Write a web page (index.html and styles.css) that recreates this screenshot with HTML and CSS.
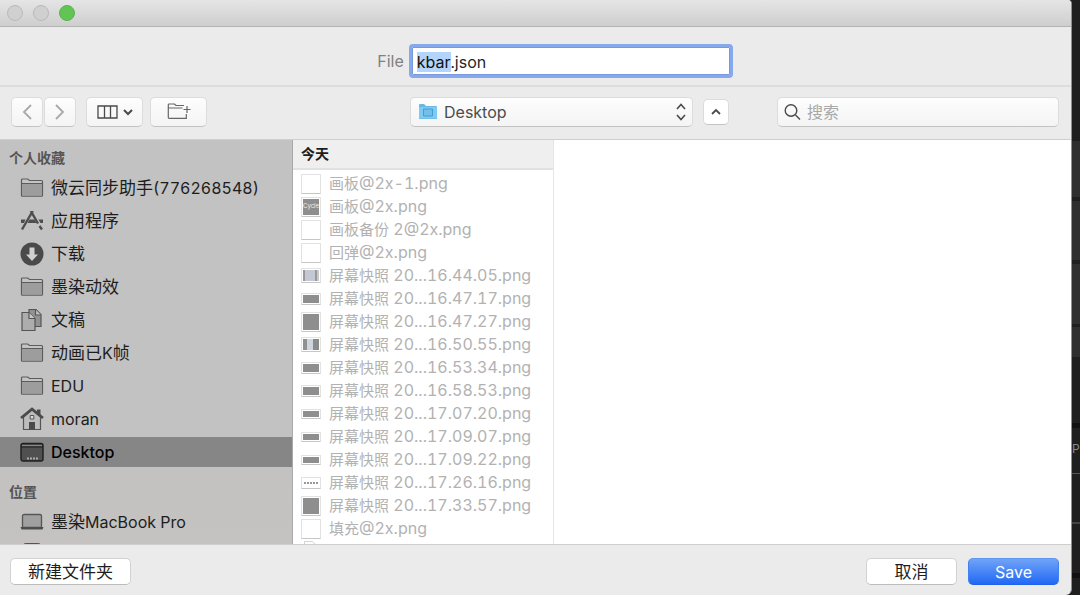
FILE: index.html
```html
<!DOCTYPE html>
<html lang="zh-CN">
<head>
<meta charset="utf-8">
<title>Save</title>
<link rel="stylesheet" href="styles.css">
</head>
<body>
<svg class="defs" aria-hidden="true">
  <symbol id="folder" viewBox="0 0 24 20"><path d="M1.500 17.500V2q0-1 1-1h5.200l1.800 1.500H21.500q1 0 1 1v14q0 .7-.7.7H2.200q-.7 0-.7-.7z" fill="#c4c4c4" stroke="#5c5c5c" stroke-width="1.200"/><path d="M2 5.500h20v12H2z" fill="#9d9d9d"/><path d="M1.500 5.500h21" stroke="#5c5c5c"/></symbol>
</svg>
<div class="screen">
  <main class="dialog">
    <header class="titlebar">
      <button class="light" aria-label="Close"></button>
      <button class="light" aria-label="Minimize"></button>
      <button class="light zoom" aria-label="Zoom"></button>
    </header>
    <div class="file-row">
      <label for="filename">File</label>
      <input id="filename" class="filename" type="text" value="kbar.json" spellcheck="false">
    </div>
    <div class="toolbar">
      <div class="tools">
        <div class="nav">
          <button class="tool back" aria-label="Back"><svg width="12" height="18" viewBox="0 0 12 18"><path d="M10 2 3 9l7 7"/></svg></button>
          <button class="tool back" aria-label="Forward"><svg width="12" height="18" viewBox="0 0 12 18"><path d="m2 2 7 7-7 7"/></svg></button>
        </div>
        <button class="tool wide" aria-label="Column view"><svg width="36" height="14" viewBox="0 0 36 14"><path d="M1 1h19v12H1zM7.500 1v12M13.500 1v12" stroke-width="1.300"/><path d="m27 5 4 4 4-4" stroke-width="2"/></svg></button>
        <button class="tool wide" aria-label="New folder"><svg class="thin" width="24" height="18" viewBox="0 0 24 18"><path d="M17 2.500H9L7.500 1H2q-.7 0-.7.700V14.500q0 .8.8.8h17.200V11M1.500 5h14M20 3v7M16.500 6.500h7"/></svg></button>
      </div>
      <div class="location">
        <div class="place">
          <svg class="place-icon" width="20" height="17" viewBox="0 0 20 17"><path d="M1 16V2q0-1 1-1h4l2 2h10q1 0 1 1v12z" fill="#68b8e3"/><path d="M1 4h18v11.500H1z" fill="#7dcbf3"/><path d="M5.500 6h9v7h-9z" fill="#72bfeb" stroke="#489dcb"/></svg>
          <select aria-label="Location"><option>Desktop</option></select>
          <svg class="place-arrows" width="12" height="18" viewBox="0 0 12 18"><path d="m2 6 4-4.500L10 6M2 12l4 4.500 4-4.500"/></svg>
        </div>
        <button class="tool collapse" aria-label="Collapse"><svg width="12" height="8" viewBox="0 0 12 8"><path d="m2 6 4-4 4 4" stroke-width="1.800"/></svg></button>
      </div>
      <div class="search">
        <svg width="18" height="18" viewBox="0 0 18 18"><circle cx="7" cy="7.500" r="5.800"/><path d="m11.500 12 4.500 4.500"/></svg>
        <input type="search" placeholder="搜索" aria-label="搜索">
      </div>
    </div>
    <div class="browser">
      <nav class="sidebar">
        <h2>个人收藏</h2>
        <ul>
          <li><svg class="ico"><use href="#folder"/></svg>微云同步助手<span>(776268548)</span></li>
          <li><svg class="ico" viewBox="0 0 24 20"><path d="M12.800 0 2 18.500M10.800 0 18 12.500M19.500 15l2.500 3.500" stroke="#4e4e4e" stroke-width="2.400"/><path d="M1 8.500h4.500L4 12H1zM9.500 8.500h5l2 3.500h-9zM18.500 8.500H23V12h-2.500z" fill="#4e4e4e"/></svg>应用程序</li>
          <li><svg class="ico round" viewBox="0 0 24 24"><circle cx="12" cy="12" r="11.500" fill="#4a4a4a"/><path d="M9.500 5.500h5v7H18l-6 6.500-6-6.500h3.500z" fill="#d0d0d0"/></svg>下载</li>
          <li><svg class="ico"><use href="#folder"/></svg>墨染动效</li>
          <li><svg class="ico round" viewBox="0 0 24 24"><g stroke="#555" stroke-width="1.200"><path d="M9 1.500h7l5 5v12H9z" fill="#929292"/><path d="M15.500 1.500V7H21" fill="#c0c0c0"/><path d="M2 4.500h7l6 6v12H2z" fill="#adadad"/><path d="M9 4.500v6h6" fill="#c8c8c8"/></g></svg>文稿</li>
          <li><svg class="ico"><use href="#folder"/></svg>动画已<span>K</span>帧</li>
          <li><svg class="ico"><use href="#folder"/></svg><span>EDU</span></li>
          <li><svg class="ico round" viewBox="0 0 24 24"><path d="M3.500 10v12.500h17V10L12 3z" fill="#bdbdbd" stroke="#555" stroke-width="1.200"/><path d="M1 11 12 2l11 9" fill="none" stroke="#4b4b4b" stroke-width="2.600"/><path d="M17 2.500h3.500V9L17 6zM9 15h6v7.500H9z" fill="#4b4b4b"/><path d="M10.200 8.500h3.600V12h-3.600z" fill="#ddd" stroke="#555"/></svg><span>moran</span></li>
          <li class="selected"><svg class="ico" viewBox="0 0 24 20"><rect x="1" y="1.500" width="22" height="17.500" rx="2" fill="#505050" stroke="#1f1f1f" stroke-width="1.400"/><path d="M2 3.500h20" stroke="#888"/><path d="M1 5h22" stroke="#1f1f1f"/><path d="M7 16.500h11" stroke="#aaa" stroke-width="2" stroke-dasharray="2 1"/></svg><span>Desktop</span></li>
        </ul>
        <h2>位置</h2>
        <ul>
          <li><svg class="ico" viewBox="0 0 24 20"><rect x="2.500" y="2.500" width="19" height="13" rx="1.500" fill="#a0a0a0" stroke="#555" stroke-width="1.300"/><path d="M.5 15h23l-1 2.500h-21z" fill="#4e4e4e"/></svg>墨染<span>MacBook Pro</span></li>
          <li><svg class="ico drive" viewBox="0 0 24 28"><rect x="3.500" y="2.500" width="17" height="22" rx="2" fill="#888" stroke="#555"/></svg></li>
        </ul>
      </nav>
      <section class="files">
        <h2>今天</h2>
        <ul>
          <li><i class="thumb square"></i><p>画板<span>@2x-1.png</span></p></li>
          <li><i class="thumb square dark">Cycle</i><p>画板<span>@2x.png</span></p></li>
          <li><i class="thumb square"></i><p>画板备份<span> 2@2x.png</span></p></li>
          <li><i class="thumb square"></i><p>回弹<span>@2x.png</span></p></li>
          <li><i class="thumb tall window"></i><p>屏幕快照<span> 20...16.44.05.png</span></p></li>
          <li><i class="thumb mid dark"></i><p>屏幕快照<span> 20...16.47.17.png</span></p></li>
          <li><i class="thumb square dark"></i><p>屏幕快照<span> 20...16.47.27.png</span></p></li>
          <li><i class="thumb tall panel"></i><p>屏幕快照<span> 20...16.50.55.png</span></p></li>
          <li><i class="thumb mid dark"></i><p>屏幕快照<span> 20...16.53.34.png</span></p></li>
          <li><i class="thumb mid dark"></i><p>屏幕快照<span> 20...16.58.53.png</span></p></li>
          <li><i class="thumb low dark"></i><p>屏幕快照<span> 20...17.07.20.png</span></p></li>
          <li><i class="thumb low dark"></i><p>屏幕快照<span> 20...17.09.07.png</span></p></li>
          <li><i class="thumb low dark"></i><p>屏幕快照<span> 20...17.09.22.png</span></p></li>
          <li><i class="thumb mid dots"></i><p>屏幕快照<span> 20...17.26.16.png</span></p></li>
          <li><i class="thumb square dark"></i><p>屏幕快照<span> 20...17.33.57.png</span></p></li>
          <li><i class="thumb square"></i><p>填充<span>@2x.png</span></p></li>
          <li><svg width="20" height="22" viewBox="0 0 20 22"><path d="M3.500 22V.5h8l5 5V22" fill="#fff" stroke="#d2d2d2"/></svg></li>
        </ul>
      </section>
      <section class="preview"></section>
    </div>
    <footer class="actions">
      <button class="btn new">新建文件夹</button>
      <button class="btn">取消</button>
      <button class="btn save">Save</button>
    </footer>
  </main>
  <aside class="behind">P</aside>
</div>
<script src="main.js"></script>
</body>
</html>
```

FILE: styles.css
```css
* { box-sizing: border-box; }
body {
  margin: 0;
  font: 16px/24px Inter, "Noto Sans CJK SC", sans-serif;
  font-variant-numeric: tabular-nums;
  color: #1d1d1d;
}
button, input, select { font: inherit; color: inherit; margin: 0; }
button { padding: 0; }
ul { list-style: none; margin: 0; padding: 0; }
h2, p { margin: 0; }
svg { flex: none; }
.defs { display: none; }

.screen {
  display: grid;
  grid-template-columns: minmax(0, 1fr) 8px;
  height: 100vh;
  background: #1f1f1f;
}
.dialog {
  display: flex;
  flex-direction: column;
  min-height: 0;
  background: #ebebeb;
  border-right: 1px solid #8f8f8f;
  border-radius: 0 4px 6px 0;
  overflow: hidden;
}

.titlebar {
  display: flex;
  flex: none;
  gap: 10px;
  height: 27px;
  padding: 5px 7px;
  background: linear-gradient(#e5e5e5, #cecece);
  border-bottom: 1px solid #b3b3b3;
}
.light {
  width: 16px;
  height: 16px;
  border: 1px solid #b9b9b9;
  border-radius: 50%;
  background: #d0d0d0;
}
.light.zoom { background: #61c454; border-color: #58b44c; }

.file-row {
  display: flex;
  flex: none;
  justify-content: center;
  align-items: center;
  gap: 8px;
  height: 60px;
  padding: 10px 0 0 36px;
  border-bottom: 2px solid #dcdcdc;
  color: #808080;
}
.filename {
  width: 318px;
  height: 28px;
  padding: 2px 4px 0;
  border: 1px solid #7898dc;
  outline: 3px solid #86a9ec;
  border-radius: 1px;
  background: #fff;
  color: #262626;
}
.filename::selection { background: #b3d4fc; color: #101010; }

.toolbar {
  display: grid;
  grid-template-columns: 399px minmax(0, 1fr) 282px;
  flex: none;
  align-items: center;
  height: 53px;
  padding: 0 12px 2px 11px;
  border-bottom: 1px solid #cecece;
}
.tools, .nav, .location { display: flex; align-items: center; }
.tools { gap: 7px; }
.nav { gap: 1px; margin-right: 3px; }
.tool, .place select, .search {
  border: 1px solid #dcdcdc;
  border-bottom-color: #c3c3c3;
  border-radius: 5px;
  background: linear-gradient(#fdfdfd, #f4f4f4);
}
.tool {
  display: flex;
  align-items: center;
  justify-content: center;
  width: 57px;
  height: 30px;
}
.tool svg, .place-arrows, .search svg { fill: none; stroke: #4a4a4a; stroke-width: 1.6; }
.tool.back { width: 32px; }
.tool.back svg { stroke: #a9a9a9; stroke-width: 1.8; }
.tool .thin { stroke: #666; stroke-width: 1.2; }
.tool.collapse { width: 26px; height: 26px; background: #fff; }
.location { gap: 10px; }
.place { position: relative; width: 283px; }
.place select {
  display: block;
  appearance: none;
  width: 100%;
  height: 30px;
  padding: 0 33px;
  color: #4c4c4c;
}
.place-icon { position: absolute; left: 8px; top: 6px; }
.place-arrows { position: absolute; right: 6px; top: 6px; }
.search {
  display: flex;
  align-items: center;
  gap: 5px;
  height: 30px;
  padding: 0 6px;
}
.search svg { stroke-width: 1.4; }
.search input {
  flex: 1;
  min-width: 0;
  padding: 0;
  border: 0;
  outline: 0;
  background: transparent;
}
.search input::placeholder { color: #a8a8a8; }

.browser {
  display: grid;
  grid-template-columns: 293px 261px minmax(0, 1fr);
  flex: 1;
  min-height: 0;
  background: #fff;
}
.sidebar {
  overflow: hidden;
  background: linear-gradient(#c2c2c2 75%, #c5c2c1);
  border-right: 1px solid #a9a9a9;
  font-size: 17px;
}
.sidebar h2 {
  padding: 6px 9px 3px;
  font-size: 14px;
  font-weight: 600;
  color: #555;
}
.sidebar ul { display: grid; gap: 3px; }
.sidebar ul + h2 { padding-top: 13px; }
.sidebar li {
  display: flex;
  align-items: center;
  height: 30px;
  padding-left: 20px;
}
.sidebar span { font-size: 16px; }
.ico { width: 24px; height: 20px; margin-right: 7px; fill: none; }
.ico.round { height: 24px; }
.ico.drive { height: 28px; }
.sidebar .selected { background: #868686; color: #000; font-weight: 500; }

.files { overflow: hidden; border-right: 1px solid #e6e6e6; }
.files h2 {
  height: 30px;
  padding: 2px 8px;
  font-size: 14px;
  font-weight: 700;
  background: #efefef;
  border-bottom: 2px solid #e1e1e1;
}
.files ul { padding-top: 2px; }
.files li {
  display: flex;
  align-items: center;
  gap: 8px;
  height: 23px;
  padding-left: 8px;
  font-size: 15px;
  color: #b2b2b2;
  white-space: nowrap;
}
.files span { font-size: 16px; }
.thumb {
  flex: none;
  width: 20px;
  padding: 1px;
  background: #fff content-box;
  border: 1px solid #e2e2e2;
  border-bottom-color: #c6c6c6;
  border-radius: 1px;
  font: 6px/14px Inter, sans-serif;
  color: #eee;
  text-align: center;
}
.square { height: 20px; }
.tall { height: 15px; }
.mid { height: 12px; }
.low { height: 10px; }
.dark { background-color: #8e8e8e; }
.window { background-image: linear-gradient(90deg, #999 2px, #c3c8d4 2px 12px, #999 12px 14px, #c9c9c9 14px); }
.panel { background-image: linear-gradient(90deg, #909090 4px, #cfd5df 4px 10px, #8b8b8b 10px); }
.dots { background-image: repeating-linear-gradient(90deg, #999 0 2px, #fff 2px 3px); background-size: 14px 2px; background-repeat: no-repeat; background-position: center; }

.actions {
  display: flex;
  flex: none;
  gap: 11px;
  height: 51px;
  padding: 13px 12px 0 10px;
  border-top: 1px solid #cfcfcf;
}
.btn {
  width: 91px;
  height: 27px;
  border: 1px solid #d2d2d2;
  border-bottom-color: #bcbcbc;
  border-radius: 5px;
  background: #fff;
  font-size: 17px;
}
.btn.new { width: 121px; margin-right: auto; }
.btn.save {
  border-color: #5f96ef #4080f0 #1f62ea;
  background: linear-gradient(#70a4f7, #2168f5);
  color: #fff;
  font-size: 16px;
}

.behind {
  padding-top: 437px;
  font-size: 12px;
  color: #8a8a8a;
  background: linear-gradient(#1f1f1f 141px, #2f2f2f 141px 197px, #1f1f1f 197px 201px, #2f2f2f 201px 260px, #1f1f1f 260px 264px, #2f2f2f 264px 324px, #1f1f1f 324px 327px, #2f2f2f 327px 357px, #1f1f1f 357px 423px, #111 423px 428px, #1f1f1f 428px 473px, #555 473px 474px, #1f1f1f 474px 522px, #444 522px 524px, #1f1f1f 524px 573px, #111 573px 578px, #1f1f1f 578px);
}
```

FILE: main.js
```js
const field = document.getElementById("filename");
field.focus();
field.setSelectionRange(0, field.value.lastIndexOf("."));
```
